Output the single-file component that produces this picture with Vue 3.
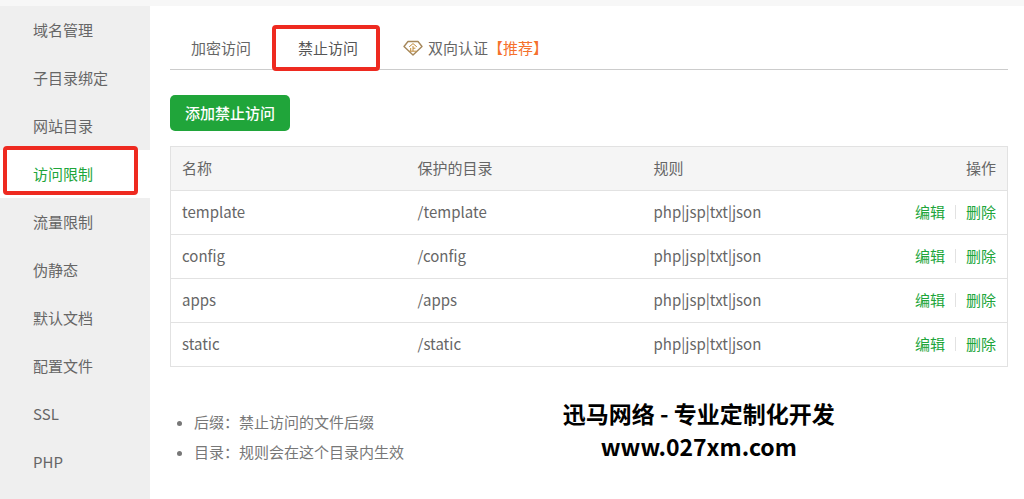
<script setup>
import { ref } from 'vue'

const menu = ['域名管理', '子目录绑定', '网站目录', '访问限制', '流量限制', '伪静态', '默认文档', '配置文件', 'SSL', 'PHP']
const activeMenu = ref('访问限制')
const activeTab = ref('deny')
const rules = ['template', 'config', 'apps', 'static'].map((name) => ({
  name,
  dir: '/' + name,
  rule: 'php|jsp|txt|json',
}))
</script>

<template>
  <div class="page">
    <nav class="sidebar">
      <a
        v-for="item in menu"
        :key="item"
        href="#"
        class="menu-item"
        :class="{ active: item === activeMenu }"
        @click.prevent="activeMenu = item"
      >{{ item }}<span v-if="item === '访问限制'" class="mark mark-menu"></span></a>
    </nav>

    <main class="content">
      <div class="tabs">
        <button type="button" class="tab" @click="activeTab = 'auth'">加密访问</button>
        <button type="button" class="tab" :class="{ current: activeTab === 'deny' }" @click="activeTab = 'deny'">
          禁止访问<span class="mark mark-tab"></span>
        </button>
        <button type="button" class="tab" @click="activeTab = 'mutual'">
          <svg class="gem" viewBox="0 0 20 16" aria-hidden="true">
            <path d="M5 1.5h10l4 5L10 15 1 6.5z" />
            <path class="thin" d="M6.2 6.8 10 3.6l3.8 3.2M10 6v5.2M10 8.2h2.4M7.7 8v3.2M6.4 11.2h7.2" />
          </svg>双向认证<span class="hot">【推荐】</span>
        </button>
      </div>

      <button type="button" class="add">添加禁止访问</button>

      <table class="rules">
        <thead>
          <tr>
            <th>名称</th>
            <th>保护的目录</th>
            <th>规则</th>
            <th class="ops">操作</th>
          </tr>
        </thead>
        <tbody>
          <tr v-for="row in rules" :key="row.name">
            <td>{{ row.name }}</td>
            <td>{{ row.dir }}</td>
            <td>{{ row.rule }}</td>
            <td class="ops">
              <div class="links">
                <a href="#" @click.prevent>编辑</a>
                <span class="sep"></span>
                <a href="#" @click.prevent>删除</a>
              </div>
            </td>
          </tr>
        </tbody>
      </table>

      <div class="footer">
        <ul class="notes">
          <li>后缀：禁止访问的文件后缀</li>
          <li>目录：规则会在这个目录内生效</li>
        </ul>
        <div class="brand">
          <div>迅马网络 - 专业定制化开发</div>
          <div>www.027xm.com</div>
        </div>
      </div>
    </main>
  </div>
</template>

<style>
body {
  background: #fff;
}
</style>

<style scoped>
.page {
  display: flex;
  box-sizing: border-box;
  min-height: 100vh;
  border-top: 6px solid #f7f7f7;
  font-family: "Noto Sans CJK SC", sans-serif;
  font-size: 15px;
  line-height: 24px;
  color: #666;
}

.sidebar {
  flex: none;
  width: 150px;
  background: #efefef;
}

.menu-item {
  position: relative;
  display: block;
  padding: 12px 0 12px 33px;
  color: #666;
  text-decoration: none;
}

.menu-item.active {
  background: #fff;
  color: #20a53a;
}

.mark {
  position: absolute;
  box-sizing: border-box;
  border: 4px solid #ee2a20;
  border-radius: 4px;
}

.mark-menu {
  inset: -4px 12px 3px 3px;
}

.mark-tab {
  inset: -1px 0 -2px 0;
}

.content {
  flex: 1;
  min-width: 0;
  padding: 20px 16px 0 20px;
}

.tabs {
  display: flex;
  border-bottom: 1px solid #ccc;
}

button {
  border: 0;
  font: inherit;
  cursor: pointer;
}

.tab {
  position: relative;
  display: flex;
  align-items: center;
  height: 43px;
  padding: 0 21px;
  background: none;
  color: #666;
  white-space: nowrap;
}

.tab.current {
  padding: 0 22px 0 26px;
  color: #555;
}

.gem {
  width: 20px;
  height: 16px;
  margin: 0 5px 0 2px;
  fill: none;
  stroke: #a5875a;
  stroke-width: 1.4;
  stroke-linejoin: round;
}

.gem .thin {
  stroke: #c08c3c;
  stroke-width: 1;
}

.hot {
  color: #f5712c;
}

.add {
  display: block;
  height: 36px;
  margin: 25px 0 15px;
  padding: 0 15px;
  border-radius: 5px;
  background: #20a53a;
  color: #fff;
  font-weight: 500;
}

.rules {
  width: 100%;
  table-layout: fixed;
  border-collapse: collapse;
  border: 1px solid #e2e2e2;
}

.rules th,
.rules td {
  box-sizing: border-box;
  height: 44px;
  padding: 0 11px 2px;
  border-bottom: 1px solid #e2e2e2;
  text-align: left;
  font-weight: 400;
}

.rules th {
  background: #f5f5f5;
}

.rules .ops {
  text-align: right;
}

.rules th:nth-child(-n + 3) {
  width: 28.2%;
}

.links {
  display: flex;
  justify-content: flex-end;
  align-items: center;
  gap: 10px;
}

.links a {
  color: #20a53a;
  text-decoration: none;
}

.sep {
  width: 1px;
  height: 14px;
  background: #e2e2e2;
}

.footer {
  display: grid;
  grid-template-columns: 47% auto;
  justify-content: start;
  align-items: start;
}

.notes {
  margin: 40px 0 0;
  padding-left: 24px;
  line-height: 30px;
  color: #777;
}

.notes li::marker {
  font-family: "Open Sans", sans-serif;
}

.brand {
  margin-top: 30px;
  margin-left: -1px;
  font-size: 23px;
  font-weight: 700;
  line-height: 33px;
  text-align: center;
  color: #000;
}
</style>
